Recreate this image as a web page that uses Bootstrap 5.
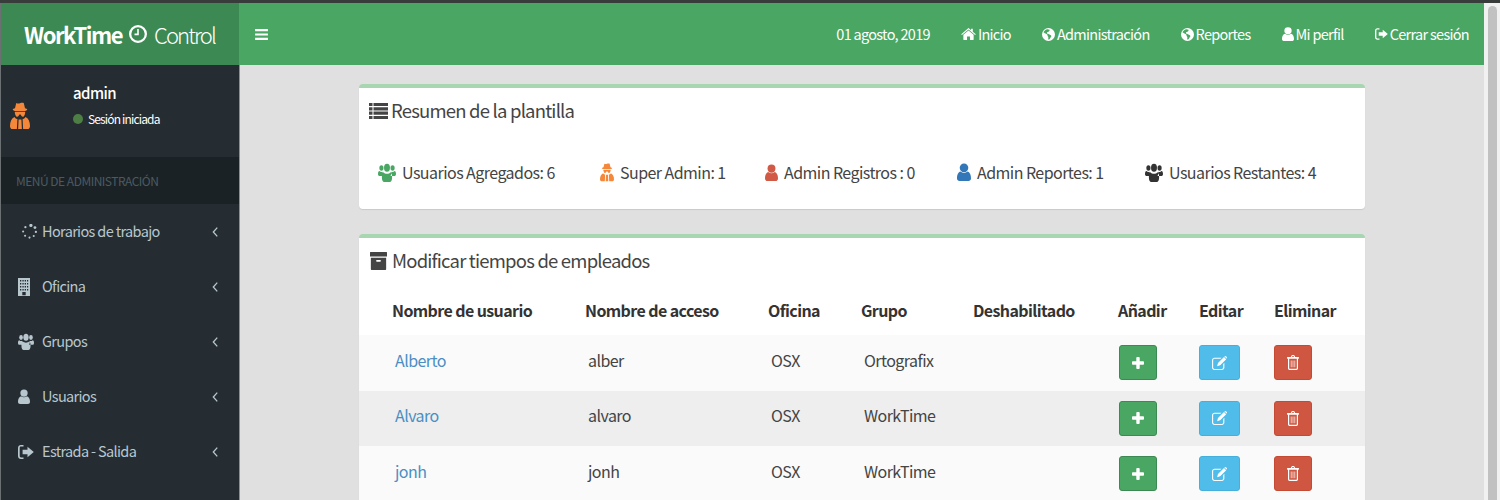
<!DOCTYPE html>
<html lang="es">
<head>
    <meta charset="UTF-8">
    <title>WorkTime Control</title>
    <link href="https://cdn.jsdelivr.net/npm/bootstrap@5.3.0/dist/css/bootstrap.min.css" rel="stylesheet">
    <style>
        html, body {
            height: 500px;
            overflow: hidden;
        }
        body {
            font-family: "Noto Sans CJK JP", "Liberation Sans", sans-serif;
            font-size: 16px;
            line-height: 24px;
            letter-spacing: -.55px;
            color: #444;
            background-color: #e0e0e0;
        }
        .ico {
            fill: currentColor;
            flex: none;
        }
        .top-strip {
            height: 3px;
            background-color: #383c3a;
        }
        .page-wrap {
            height: 497px;
            overflow: hidden;
        }
        .page-main {
            width: 1484px;
            border-left: 1px solid #6b7073;
        }
        .fake-scroll {
            width: 16px;
            background-color: #f1f1f1;
            padding: 3px 3px 0 4px;
        }
        .fake-thumb {
            height: 100%;
            background-color: #c1c1c1;
            border-radius: 5px 5px 0 0;
        }
        .head-row {
            height: 62px;
            flex: none;
        }
        .logo-box {
            width: 238px;
            background-color: #3d8953;
            color: #fff;
            font-size: 22px;
            gap: 7px;
            padding-left: 23px;
        }
        .logo-bold {
            letter-spacing: -1.5px;
            font-weight: 700;
        }
        .logo-light {
            font-weight: 300;
            letter-spacing: -1.9px;
        }
        .head-bar {
            background-color: #4aa663;
            color: #fff;
            padding-left: 15px;
            padding-right: 15px;
            border-left: 1px solid #4aa663;
        }
        .head-nav {
            gap: 31px;
            font-size: 14.5px;
            letter-spacing: -.7px;
        }
        .head-nav span {
            display: flex;
            align-items: center;
            gap: 2px;
        }
        .side-col {
            width: 238px;
            background-color: #252d33;
            color: #b8c7ce;
        }
        .user-box {
            height: 92px;
            padding-left: 9px;
        }
        .user-ava {
            color: #f5873a;
            margin-top: 10px;
        }
        .user-text {
            margin-bottom: 10px;
            margin-left: 43px;
        }
        .user-name {
            color: #fff;
            font-size: 15px;
            font-weight: 500;
            letter-spacing: -.6px;
        }
        .user-state {
            color: #fff;
            font-size: 12px;
            letter-spacing: -.85px;
            margin-top: 2px;
            gap: 5px;
        }
        .state-dot {
            width: 10px;
            height: 10px;
            border-radius: 50%;
            background-color: #4d7f45;
        }
        .menu-title {
            height: 47px;
            background-color: #1b2226;
            color: #4b5a62;
            font-size: 12px;
            letter-spacing: -.5px;
            padding-left: 15px;
        }
        .menu-row {
            height: 55px;
            padding-left: 17px;
            padding-right: 20px;
            font-size: 14.5px;
            letter-spacing: -.65px;
            gap: 8px;
        }
        .menu-gap-sm {
            gap: 5px;
        }
        .menu-txt {
            flex-grow: 1;
            padding-bottom: 2px;
        }
        .side-line {
            width: 1px;
            background-color: #8a8f90;
        }
        .content-col {
            padding: 19px 119px 0;
        }
        .sheet {
            background-color: #fff;
            border-top: 4px solid #a8d6b1;
            border-radius: 4px;
            box-shadow: 0 1px 1px rgba(0, 0, 0, .1);
            margin-bottom: 25px;
        }
        .sheet-top {
            height: 46px;
            padding-left: 10px;
            gap: 3px;
            font-size: 18.5px;
            letter-spacing: -.8px;
            color: #444;
        }
        .sheet-top span {
            padding-bottom: 2px;
        }
        .sheet-top.gap-wide {
            gap: 5px;
            padding-left: 11px;
        }
        .stat-grid {
            display: grid;
            grid-template-columns: 222px 165px 192px 188px auto;
            padding: 26px 0 25px 19px;
        }
        .stat-item {
            gap: 6px;
        }
        .c-green { color: #4aa663; }
        .c-orange { color: #f5873a; }
        .c-red { color: #d05a45; }
        .c-blue { color: #3277b8; }
        .c-dark { color: #333; }
        .emp-table {
            table-layout: fixed;
            width: 1006px;
            margin: 0;
            font-size: 16px;
        }
        .emp-table th {
            padding: 0;
            height: 51px;
            border: 0;
            font-weight: 700;
            vertical-align: middle;
            color: #333;
            letter-spacing: -.6px;
        }
        .emp-table td {
            height: 55.5px;
            padding: 0 0 6px 3px;
            border: 0;
            vertical-align: middle;
            color: #444;
            background-color: #fafafa;
            box-shadow: none;
        }
        .emp-table tr:nth-child(even) td {
            background-color: #eee;
        }
        .emp-table th:first-child {
            padding-left: 33px;
        }
        .emp-table td:first-child {
            padding-left: 36px;
        }
        .emp-table a {
            color: #4a8fc4;
            text-decoration: none;
        }
        .emp-table td.btn-cell {
            padding: 0;
        }
        .emp-table a.act-btn, .emp-table a.act-btn:hover {
            display: flex;
            align-items: center;
            justify-content: center;
            width: 38px;
            height: 35px;
            padding: 0;
            color: #fff;
            border-radius: 3px;
        }
        .emp-table a.act-add {
            background-color: #4aa663;
            border: 1px solid #3d8953;
            margin-left: 1px;
        }
        .emp-table a.act-edit {
            background-color: #50bce9;
            border: 1px solid #46b0dd;
            width: 41px;
        }
        .emp-table a.act-del {
            background-color: #cf5640;
            border: 1px solid #c44a34;
        }
    </style>
</head>
<body>

<svg class="d-none">
    <symbol id="i-user" viewBox="1.600 0 12.800 16" preserveAspectRatio="none"><circle cx="8" cy="4.300" r="3.900"/><path d="M1.600 13.600c0-3 1.200-5.600 3.200-6 .9.800 2 1.200 3.200 1.200s2.300-.4 3.200-1.200c2 .4 3.200 3 3.200 6 0 1.500-1 2.400-2.300 2.400H3.900c-1.300 0-2.300-.9-2.300-2.400z"/></symbol>
    <symbol id="i-users" viewBox="0 0 20 16" preserveAspectRatio="none"><circle cx="3.800" cy="4.200" r="2.300"/><circle cx="16.200" cy="4.200" r="2.300"/><circle cx="10" cy="4" r="3.300"/><path d="M0 9.300c0-1.500.6-2.500 1.700-2.500.6.5 1.300.8 2.100.8.500 0 1-.1 1.400-.3-.2 1.300.1 2.700 1 3.700H2C.8 11 0 10.500 0 9.300zM20 9.300c0-1.500-.6-2.500-1.700-2.500-.6.5-1.300.8-2.100.8-.5 0-1-.1-1.400-.3.2 1.300-.1 2.700-1 3.700H18c1.200 0 2-.5 2-1.700zM6 7.800c.9 1 2.500 1.300 4 1.300s3.100-.3 4-1.300c1 .3 1.700 1.800 1.700 4.200 0 2.500-1 4-2.700 4H7c-1.700 0-2.700-1.500-2.700-4 0-2.400.7-3.900 1.700-4.200z"/></symbol>
    <symbol id="i-secret" viewBox="0 0 16 18" preserveAspectRatio="none"><path fill-rule="evenodd" d="M5 .6c1 .5 2 .5 3 .2 1-.3 2-.3 3-.2l1 3.400c1 .2 1.800.5 1.800.9s-.8.700-1.800.9H4c-1-.2-1.800-.5-1.800-.9s.8-.7 1.800-.9zM3.900 6.300h8.200c.1.300.1.800-.2 1.500-.4.900-.9 1.700-1.700 1.700-.7 0-1.100-.5-1.400-1.100-.2-.4-1.400-.4-1.600 0-.3.6-.7 1.100-1.400 1.100-.8 0-1.300-.8-1.700-1.700-.3-.7-.3-1.200-.2-1.500zM3.600 9.600c.6 1 1.700 1.300 2.300 1.300l-.4 6.500H2c-1.200 0-2-.8-2-2 0-2.900 1.300-5 3.600-5.800zM12.400 9.600C14.700 10.400 16 12.500 16 15.400c0 1.200-.8 2-2 2h-3.500l-.4-6.500c.6 0 1.700-.3 2.300-1.300zM6.900 11.200h2.200l.4 6.200h-3z"/></symbol>
    <symbol id="i-building" viewBox="0 0 12 18" preserveAspectRatio="xMinYMid meet"><path fill-rule="evenodd" d="M0 0h12v18H0zM2 2v1.500h1.300V2zM4.400 2v1.500h1.300V2zM6.700 2v1.500H8V2zM9 2v1.500h1.200V2zM2 5v1.500h1.300V5zM4.400 5v1.500h1.300V5zM6.700 5v1.500H8V5zM9 5v1.500h1.200V5zM2 8v1.500h1.300V8zM4.400 8v1.500h1.300V8zM6.700 8v1.500H8V8zM9 8v1.500h1.200V8zM2 11v1.500h1.300V11zM4.400 11v1.500h1.300V11zM6.700 11v1.500H8V11zM9 11v1.500h1.200V11zM4.300 14v3.300h3.400V14z"/></symbol>
    <symbol id="i-signout" viewBox="0 0 16 14" preserveAspectRatio="xMinYMid meet"><path d="M5.500 1.600H3c-.8 0-1.300.5-1.300 1.300v8.200c0 .8.500 1.300 1.300 1.300h2.500V14H3C1.300 14 0 12.700 0 11V3C0 1.300 1.300 0 3 0h2.500z"/><path d="M9.500 1.700 15.800 7l-6.300 5.300V9.300H4.600V4.700h4.900z"/></symbol>
    <symbol id="i-home" viewBox="0 0 17 14"><path d="M8.500 0 11.500 2.600V1h2v3.300L17 7.300l-.8.900-7.700-6.500L.8 8.200 0 7.300z"/><path d="M8.500 3 14.500 8v5.500c0 .3-.2.5-.5.500h-3.800v-4H6.800v4H3c-.3 0-.5-.2-.5-.5V8z"/></symbol>
    <symbol id="i-globe" viewBox="0 0 16 16"><path fill-rule="evenodd" d="M8 0a8 8 0 1 1 0 16A8 8 0 0 1 8 0zM5.500 1.700C3.800 2.400 2.500 3.700 1.800 5.300c.8.300 1.100 1 1.900 1.300.9.400 1.600.9 2.300 1.200.9.400.6 1.400 1 2.100.3.700 1 1.200.8 2.100-.1.900-.3 1.700.2 2.400.9-.2 1.700-1 2-1.900.3-1 1.300-1.400 1.500-2.400.2-1-1-1.500-1.800-1.800-.8-.3-1.400-1.300-2.300-1.300-.9 0-1.500-.5-1.300-1.300.2-.7 1-.5 1.500-.8.600-.4.600-1.100 1.200-1.300.5-.2.800-.8.500-1.300C8 1.400 6.500 1.300 5.500 1.700z"/></symbol>
    <symbol id="i-bars" viewBox="0 0 14 12"><path d="M0 0h14v2.400H0zM0 4.800h14v2.400H0zM0 9.600h14V12H0z"/></symbol>
    <symbol id="i-list" viewBox="0 0 19 16"><path d="M0 0h3.500v3.100H0zM4.500 0H19v3.100H4.500zM0 4.300h3.500v3.100H0zM4.500 4.300H19v3.100H4.500zM0 8.600h3.500v3.100H0zM4.500 8.600H19v3.100H4.500zM0 12.900h3.500V16H0zM4.500 12.900H19V16H4.500z"/></symbol>
    <symbol id="i-archive" viewBox="0 0 18 16" preserveAspectRatio="none"><path fill-rule="evenodd" d="M.5 0h17c.3 0 .5.200.5.500v3.500H0V.5C0 .2.200 0 .5 0zM.9 5h16.200v10c0 .6-.4 1-1 1H1.900c-.6 0-1-.4-1-1zM7 7c-.6 0-.6 1.600 0 1.600h4c.6 0 .6-1.600 0-1.600z"/></symbol>
    <symbol id="i-plus" viewBox="0 0 12 12"><path d="M4.300 1c0-.5.400-1 1-1h1.400c.6 0 1 .5 1 1v3.300H11c.5 0 1 .4 1 1v1.400c0 .6-.5 1-1 1H7.700V11c0 .5-.4 1-1 1H5.300c-.6 0-1-.5-1-1V7.700H1c-.5 0-1-.4-1-1V5.300c0-.6.500-1 1-1h3.300z"/></symbol>
    <symbol id="i-edit" viewBox="0 0 16 15"><path d="M2.700 1.800h7.500L9 3H2.700C1.800 3 1.200 3.600 1.200 4.500v7.800c0 .9.600 1.500 1.500 1.500h7.800c.9 0 1.500-.6 1.500-1.500V8.500l1.200-1.200v5c0 1.500-1.200 2.700-2.700 2.700H2.700C1.200 15 0 13.800 0 12.300V4.500C0 3 1.200 1.800 2.700 1.800z"/><path d="M12.800 1 15.200 3.400 8.700 9.900 5.400 11l1-3.400zM13.500.3c.4-.4 1-.4 1.400 0l.9.900c.4.400.4 1 0 1.400l-.2.200-2.300-2.300z"/></symbol>
    <symbol id="i-trash" viewBox="0 0 12 15"><path fill-rule="evenodd" d="M3.800 2 4.400.7C4.600.3 5 0 5.400 0h1.200c.4 0 .8.300 1 .7L8.200 2h3.300c.3 0 .5.200.5.500v.7c0 .3-.2.500-.5.500H11v9.600c0 1-.7 1.700-1.500 1.700h-7C1.700 15 1 14.300 1 13.300V3.700H.5c-.3 0-.5-.2-.5-.5v-.7C0 2.200.2 2 .5 2zM5 2h2l-.5-.9h-1zM2.200 3.700v9.600c0 .3.200.5.300.5h7c.1 0 .3-.2.3-.5V3.700zM3.800 5.400h.7v6.800h-.7zM5.650 5.400h.7v6.800h-.7zM7.500 5.400h.7v6.800h-.7z"/></symbol>
    <symbol id="i-spin" viewBox="0 0 16 16" preserveAspectRatio="xMaxYMid meet"><circle cx="9.500" cy="1.500" r="1.700"/><circle cx="13.800" cy="3.800" r="1.500"/><circle cx="14.800" cy="8.500" r="1.200"/><circle cx="12.500" cy="12.800" r="1.100"/><circle cx="8" cy="14.500" r="1.100"/><circle cx="3.300" cy="12.500" r="1.100"/><circle cx="1.200" cy="8" r="1.100"/><circle cx="3.600" cy="3.400" r="1.200"/></symbol>
    <symbol id="i-clock" viewBox="0 0 18 18"><path fill-rule="evenodd" d="M9 0a9 9 0 1 1 0 18A9 9 0 0 1 9 0zm0 2.300a6.700 6.700 0 1 0 0 13.400A6.700 6.700 0 0 0 9 2.300zM8.200 4h1.600v6.200H5.500V8.600h2.700z"/></symbol>
    <symbol id="i-left" viewBox="0 0 8 12"><path d="M6 1 1.500 6 6 11" fill="none" stroke="currentColor" stroke-width="1.500"/></symbol>
</svg>

<div class="top-strip"></div>
<div class="page-wrap d-flex">
    <div class="page-main d-flex flex-column">
        <header class="head-row d-flex">
            <div class="logo-box d-flex align-items-center">
                <span class="logo-bold">WorkTime</span>
                <svg class="ico" width="18" height="18"><use href="#i-clock"/></svg>
                <span class="logo-light">Control</span>
            </div>
            <div class="head-bar flex-grow-1 d-flex align-items-center justify-content-between">
                <svg class="ico" width="13" height="11"><use href="#i-bars"/></svg>
                <div class="head-nav d-flex align-items-center">
                    <span>01 agosto, 2019</span>
                    <span><svg class="ico" width="15" height="12"><use href="#i-home"/></svg>Inicio</span>
                    <span><svg class="ico" width="13" height="13"><use href="#i-globe"/></svg>Administración</span>
                    <span><svg class="ico" width="13" height="13"><use href="#i-globe"/></svg>Reportes</span>
                    <span><svg class="ico" width="12" height="14"><use href="#i-user"/></svg>Mi perfil</span>
                    <span><svg class="ico" width="13" height="12"><use href="#i-signout"/></svg>Cerrar sesión</span>
                </div>
            </div>
        </header>
        <div class="d-flex flex-grow-1 overflow-hidden">
            <aside class="side-col flex-none">
                <div class="user-box d-flex align-items-center">
                    <svg class="ico user-ava" width="20" height="28"><use href="#i-secret"/></svg>
                    <div class="user-text">
                        <div class="user-name">admin</div>
                        <div class="user-state d-flex align-items-center"><i class="state-dot"></i>Sesión iniciada</div>
                    </div>
                </div>
                <div class="menu-title d-flex align-items-center">MENÚ DE ADMINISTRACIÓN</div>
                <div class="menu-row menu-gap-sm d-flex align-items-center"><svg class="ico" width="19" height="15"><use href="#i-spin"/></svg><span class="menu-txt">Horarios de trabajo</span><svg class="ico" width="7" height="12"><use href="#i-left"/></svg></div>
                <div class="menu-row d-flex align-items-center"><svg class="ico" width="16" height="18"><use href="#i-building"/></svg><span class="menu-txt">Oficina</span><svg class="ico" width="7" height="12"><use href="#i-left"/></svg></div>
                <div class="menu-row d-flex align-items-center"><svg class="ico" width="16" height="17"><use href="#i-users"/></svg><span class="menu-txt">Grupos</span><svg class="ico" width="7" height="12"><use href="#i-left"/></svg></div>
                <div class="menu-row d-flex align-items-center"><svg class="ico" width="12" height="15"><use href="#i-user"/></svg><span class="menu-txt ps-1">Usuarios</span><svg class="ico" width="7" height="12"><use href="#i-left"/></svg></div>
                <div class="menu-row d-flex align-items-center"><svg class="ico" width="16" height="14"><use href="#i-signout"/></svg><span class="menu-txt">Estrada - Salida</span><svg class="ico" width="7" height="12"><use href="#i-left"/></svg></div>
            </aside>
            <div class="side-line flex-none"></div>
            <main class="content-col flex-grow-1">
                <section class="sheet">
                    <div class="sheet-top d-flex align-items-center">
                        <svg class="ico" width="19" height="16"><use href="#i-list"/></svg>
                        <span>Resumen de la plantilla</span>
                    </div>
                    <div class="stat-grid">
                        <div class="stat-item d-flex align-items-center"><svg class="ico c-green" width="18" height="19"><use href="#i-users"/></svg>Usuarios Agregados: 6</div>
                        <div class="stat-item d-flex align-items-center"><svg class="ico c-orange" width="14" height="19"><use href="#i-secret"/></svg>Super Admin: 1</div>
                        <div class="stat-item d-flex align-items-center"><svg class="ico c-red" width="13" height="17"><use href="#i-user"/></svg>Admin Registros : 0</div>
                        <div class="stat-item d-flex align-items-center"><svg class="ico c-blue" width="14" height="18"><use href="#i-user"/></svg>Admin Reportes: 1</div>
                        <div class="stat-item d-flex align-items-center"><svg class="ico c-dark" width="18" height="19"><use href="#i-users"/></svg>Usuarios Restantes: 4</div>
                    </div>
                </section>
                <section class="sheet">
                    <div class="sheet-top gap-wide d-flex align-items-center">
                        <svg class="ico" width="17" height="18"><use href="#i-archive"/></svg>
                        <span>Modificar tiempos de empleados</span>
                    </div>
                    <table class="table emp-table">
                        <colgroup>
                            <col style="width:226px"><col style="width:183px"><col style="width:93px"><col style="width:112px"><col style="width:145px"><col style="width:81px"><col style="width:75px"><col>
                        </colgroup>
                        <thead>
                            <tr><th>Nombre de usuario</th><th>Nombre de acceso</th><th>Oficina</th><th>Grupo</th><th>Deshabilitado</th><th>Añadir</th><th>Editar</th><th>Eliminar</th></tr>
                        </thead>
                        <tbody>
                            <tr>
                                <td><a href="#">Alberto</a></td><td>alber</td><td>OSX</td><td>Ortografix</td><td></td>
                                <td class="btn-cell"><a class="btn act-btn act-add" href="#"><svg class="ico" width="12" height="12"><use href="#i-plus"/></svg></a></td>
                                <td class="btn-cell"><a class="btn act-btn act-edit" href="#"><svg class="ico" width="15" height="14"><use href="#i-edit"/></svg></a></td>
                                <td class="btn-cell"><a class="btn act-btn act-del" href="#"><svg class="ico" width="12" height="15"><use href="#i-trash"/></svg></a></td>
                            </tr>
                            <tr>
                                <td><a href="#">Alvaro</a></td><td>alvaro</td><td>OSX</td><td>WorkTime</td><td></td>
                                <td class="btn-cell"><a class="btn act-btn act-add" href="#"><svg class="ico" width="12" height="12"><use href="#i-plus"/></svg></a></td>
                                <td class="btn-cell"><a class="btn act-btn act-edit" href="#"><svg class="ico" width="15" height="14"><use href="#i-edit"/></svg></a></td>
                                <td class="btn-cell"><a class="btn act-btn act-del" href="#"><svg class="ico" width="12" height="15"><use href="#i-trash"/></svg></a></td>
                            </tr>
                            <tr>
                                <td><a href="#">jonh</a></td><td>jonh</td><td>OSX</td><td>WorkTime</td><td></td>
                                <td class="btn-cell"><a class="btn act-btn act-add" href="#"><svg class="ico" width="12" height="12"><use href="#i-plus"/></svg></a></td>
                                <td class="btn-cell"><a class="btn act-btn act-edit" href="#"><svg class="ico" width="15" height="14"><use href="#i-edit"/></svg></a></td>
                                <td class="btn-cell"><a class="btn act-btn act-del" href="#"><svg class="ico" width="12" height="15"><use href="#i-trash"/></svg></a></td>
                            </tr>
                        </tbody>
                    </table>
                </section>
            </main>
        </div>
    </div>
    <div class="fake-scroll flex-none"><div class="fake-thumb"></div></div>
</div>

<script src="https://cdn.jsdelivr.net/npm/bootstrap@5.3.0/dist/js/bootstrap.bundle.min.js"></script>
</body>
</html>
